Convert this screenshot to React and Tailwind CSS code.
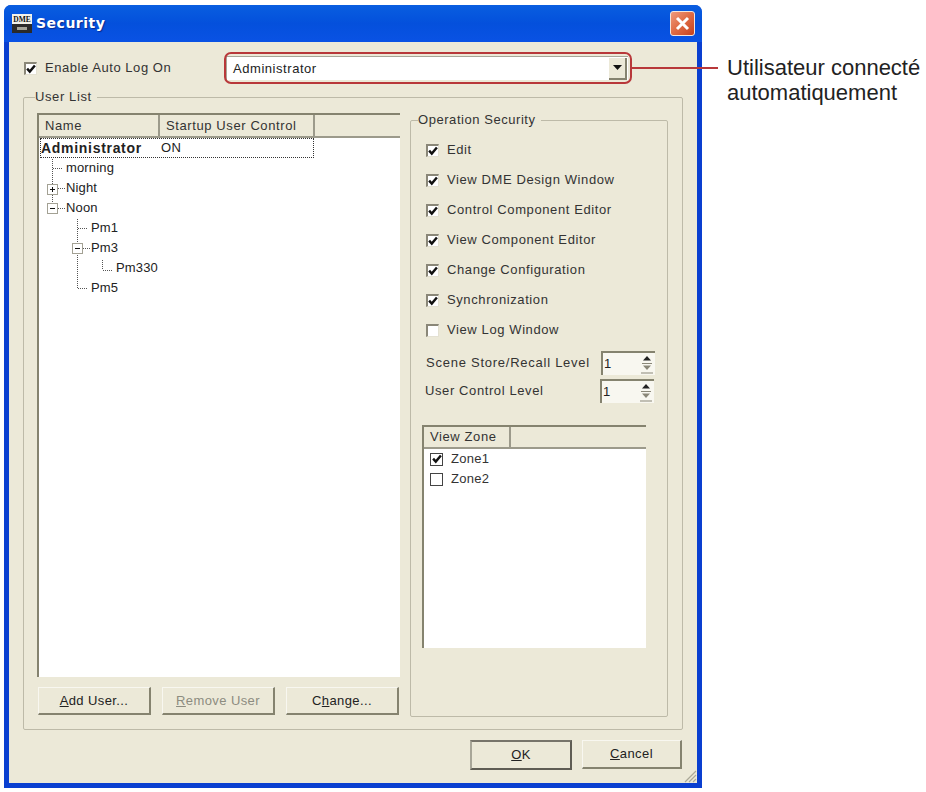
import React from "react";

const perms = [
    ["Edit", true],
    ["View DME Design Window", true],
    ["Control Component Editor", true],
    ["View Component Editor", true],
    ["Change Configuration", true],
    ["Synchronization", true],
    ["View Log Window", false],
];

const users = [
    ["morning", "pl-[27px]"],
    ["Night", "pl-[27px]"],
    ["Noon", "pl-[27px]"],
    ["Pm1", "pl-[52px]"],
    ["Pm3", "pl-[52px]"],
    ["Pm330", "pl-[77px]"],
    ["Pm5", "pl-[52px]"],
];

const Check = ({ on, boxed }) => (
    <span
        className={`flex h-[13px] w-[13px] shrink-0 items-center justify-center bg-white ${
            boxed
                ? "border border-[#444]"
                : "border-t-2 border-l-2 border-r border-b border-t-[#8a8778] border-l-[#8a8778] border-r-[#e4e1d2] border-b-[#e4e1d2]"
        }`}
    >
        {on && (
            <svg width="10" height="10" viewBox="0 0 9 9" className="shrink-0">
                <path d="M1 4.2 L3.4 6.8 L8 1.4" fill="none" stroke="#111" strokeWidth="2.2" />
            </svg>
        )}
    </span>
);

const Btn = ({ className = "", children, strong, off }) => (
    <button
        className={`flex items-center justify-center bg-[#ece9d8] text-[13px] tracking-[0.4px] ${
            strong
                ? "border-2 border-t-[#77746a] border-l-[#a8a698] border-r-[#5f5d54] border-b-[#5f5d54]"
                : "border-t border-l border-r-2 border-b-2 border-t-[#f8f7f0] border-l-[#f8f7f0] border-r-[#85836f] border-b-[#85836f]"
        } ${off ? "text-[#8d8c80]" : "text-[#222]"} ${className}`}
    >
        {children}
    </button>
);

const Group = ({ title, className = "", legend = "", children }) => (
    <fieldset className={`rounded-[2px] border border-[#bdbaa8] ${className}`}>
        <legend className={`pr-[5px] text-[13px] leading-[14px] text-[#333] ${legend}`}>{title}</legend>
        {children}
    </fieldset>
);

const HeaderCell = ({ className = "", children }) => (
    <div className={`flex items-center border-r-2 border-r-[#9c9a8b] pl-[6px] text-[13px] tracking-[0.6px] text-[#333] ${className}`}>
        {children}
    </div>
);

const Spinner = () => (
    <div className="flex h-[24px] w-[54px] border-t-2 border-l-2 border-t-[#85836f] border-l-[#85836f] bg-[#f8f7f0] pl-[1px] text-[13px] leading-[22px] text-[#222]">
        <span className="flex-1">1</span>
        <svg width="14" height="22" viewBox="0 0 14 22" className="mr-[1px]">
            <path d="M7 3 L11 7.5 L3 7.5 Z" fill="#222" />
            <path d="M2 10.5 H12" stroke="#8a8778" />
            <path d="M7 17 L11 12.5 L3 12.5 Z" fill="#8a8778" />
            <path d="M1 20 H13" stroke="#8a8778" />
        </svg>
    </div>
);

const TreeLines = () => (
    <svg className="absolute -left-[1px] top-0" width="130" height="170" viewBox="0 0 130 170">
        <g stroke="#555" strokeDasharray="1 1" fill="none">
            <path d="M14.5 21 V65" />
            <path d="M15 30.5 H24 M20 50.5 H27 M20 70.5 H27" />
            <path d="M39.5 81 V150" />
            <path d="M40 90.5 H50 M45 110.5 H52 M40 150.5 H50" />
            <path d="M64.5 122 V132 M65 132.5 H75" />
        </g>
        <g fill="#fff" stroke="#a3a194">
            <rect x="9.5" y="46.5" width="10" height="10" />
            <rect x="9.5" y="65.5" width="10" height="10" />
            <rect x="34.5" y="105.5" width="10" height="10" />
        </g>
        <path d="M12 51.5 H17 M14.5 49 V54 M12 70.5 H17 M37 110.5 H42" stroke="#111" />
    </svg>
);

const App = () => {
    return (
        <div className="flex h-[792px] w-[926px] bg-white pl-[4px] pt-[5px] font-['Liberation_Sans',sans-serif]">
            {/* Dialog window */}
            <div className="relative flex h-[783px] w-[698px] shrink-0 flex-col rounded-t-[7px] bg-[#0a3fd0] px-[5px] pb-[5px]">
                {/* Title bar */}
                <div className="-mx-[5px] flex h-[37px] items-center rounded-t-[7px] bg-gradient-to-b from-[#0a5ee0] via-[#0450dc] to-[#0a52e4] pl-[8px] pr-[7px]">
                    <svg width="20" height="19" viewBox="0 0 20 19" className="shrink-0">
                        <rect width="20" height="10" fill="#f2f2ea" />
                        <rect y="10" width="20" height="9" fill="#2a2a2a" />
                        <rect x="5" y="13" width="10" height="3" fill="#a5a59a" />
                        <text x="10" y="8" textAnchor="middle" fontSize="7.5" fontWeight="700" fontFamily="Liberation Serif, serif" fill="#111">DME</text>
                    </svg>
                    <span className="ml-[4px] flex-1 font-['DejaVu_Sans',sans-serif] text-[14px] font-bold tracking-[0.5px] text-white [text-shadow:1px_1px_1px_#0a2a90]">
                        Security
                    </span>
                    <div className="flex h-[25px] w-[25px] items-center justify-center rounded-[3px] border border-[#f4e6dc] bg-gradient-to-br from-[#ee9a7c] via-[#df6a42] to-[#c5401c]">
                        <svg width="15" height="15" viewBox="0 0 15 15">
                            <path d="M2 2 L13 13 M13 2 L2 13" stroke="#fff" strokeWidth="3" />
                        </svg>
                    </div>
                </div>

                {/* Client area */}
                <div className="flex flex-1 flex-col bg-[#ece9d8] pl-[14px] pr-[15px]">
                    <div className="flex h-[47px] items-center pl-[1px] pt-[5px]">
                        <div className="flex w-[202px] items-center gap-[8px] text-[13px] tracking-[0.55px] text-[#333]">
                            <Check on />
                            Enable Auto Log On
                        </div>
                        <div className="flex h-[24px] w-[402px] items-center border-t border-l border-t-[#a8a698] border-l-[#a8a698] bg-white pl-[6px] pr-[1px] text-[13px] tracking-[0.55px] text-[#222]">
                            <span className="flex-1">Administrator</span>
                            <span className="flex h-[22px] w-[18px] items-center justify-center border-r-2 border-b-2 border-r-[#85836f] border-b-[#85836f] bg-[#ece9d8]">
                                <svg width="9" height="5" viewBox="0 0 9 5">
                                    <path d="M0 0 H9 L4.5 5 Z" fill="#111" />
                                </svg>
                            </span>
                        </div>
                    </div>

                    <Group
                        title="User List"
                        legend="-ml-[2px] tracking-[0.6px]"
                        className="mt-[1px] flex h-[640px] gap-[10px] pl-[13px] pr-[14px]"
                    >
                        <div className="flex w-[363px] shrink-0 flex-col pt-[9px]">
                            {/* User tree */}
                            <div className="flex h-[564px] flex-col border-t-2 border-l-2 border-t-[#85836f] border-l-[#85836f] bg-white">
                                <div className="flex h-[23px] shrink-0 border-b-2 border-b-[#9c9a8b] bg-[#ece9d8]">
                                    <HeaderCell className="w-[121px]">Name</HeaderCell>
                                    <HeaderCell className="w-[155px]">Startup User Control</HeaderCell>
                                </div>
                                <div className="relative">
                                    <TreeLines />
                                    <div className="ml-[1px] flex h-[20px] w-[274px] items-center border border-dotted border-[#333] text-[#222]">
                                        <span className="w-[120px] text-[14px] font-bold tracking-[0.7px]">Administrator</span>
                                        <span className="text-[13px] tracking-[0.5px]">ON</span>
                                    </div>
                                    {users.map(([name, pad]) => (
                                        <div key={name} className={`relative flex h-[20px] items-center text-[13px] tracking-[0.15px] text-[#222] ${pad}`}>
                                            {name}
                                        </div>
                                    ))}
                                </div>
                            </div>
                            <div className="mt-[10px] flex justify-between pl-[1px] pr-[1px]">
                                <Btn className="h-[28px] w-[113px]">
                                    <span><u>A</u>dd User...</span>
                                </Btn>
                                <Btn off className="h-[28px] w-[113px]">
                                    <span><u>R</u>emove User</span>
                                </Btn>
                                <Btn className="h-[28px] w-[113px]">
                                    <span>C<u>h</u>ange...</span>
                                </Btn>
                            </div>
                        </div>

                        <Group
                            title="Operation Security"
                            legend="-ml-[8px] tracking-[0.55px]"
                            className="mt-[9px] h-[604px] w-[258px] shrink-0 pl-[15px] pr-[8px]"
                        >
                            <div className="flex flex-col pt-[8px]">
                                {perms.map(([label, on]) => (
                                    <div key={label} className="flex h-[30px] items-center gap-[8px] text-[13px] tracking-[0.6px] text-[#333]">
                                        <Check on={on} />
                                        {label}
                                    </div>
                                ))}
                            </div>
                            <div className="mt-[4px] flex h-[28px] items-center justify-between pr-[4px] text-[13px] tracking-[0.75px] text-[#333]">
                                <span>Scene Store/Recall Level</span>
                                <Spinner />
                            </div>
                            <div className="flex h-[27px] items-center justify-between pr-[5px] text-[13px] tracking-[0.6px] text-[#333]">
                                <span className="-ml-[1px]">User Control Level</span>
                                <Spinner />
                            </div>
                            <div className="-ml-[4px] mt-[21px] flex h-[223px] w-[224px] flex-col border-t-2 border-l-2 border-t-[#85836f] border-l-[#85836f] bg-white">
                                <div className="flex h-[22px] shrink-0 border-b-2 border-b-[#9c9a8b] bg-[#ece9d8]">
                                    <HeaderCell className="w-[87px]">View Zone</HeaderCell>
                                </div>
                                <div className="flex flex-col pl-[6px]">
                                    <div className="flex h-[20px] items-center gap-[8px] text-[13px] tracking-[0.3px] text-[#333]">
                                        <Check on boxed />
                                        Zone1
                                    </div>
                                    <div className="flex h-[20px] items-center gap-[8px] text-[13px] tracking-[0.3px] text-[#333]">
                                        <Check boxed />
                                        Zone2
                                    </div>
                                </div>
                            </div>
                        </Group>
                    </Group>

                    <div className="mt-[10px] flex justify-end gap-[10px]">
                        <Btn strong className="h-[30px] w-[102px]">
                            <span><u>O</u>K</span>
                        </Btn>
                        <Btn className="h-[29px] w-[100px]">
                            <span><u>C</u>ancel</span>
                        </Btn>
                    </div>
                </div>

                {/* Resize grip in the window corner */}
                <svg className="absolute bottom-[5px] right-[5px]" width="15" height="15" viewBox="0 0 15 15">
                    <path d="M14 3 L3 14 M14 7 L7 14 M14 11 L11 14" stroke="#aaa897" strokeWidth="1.2" />
                </svg>

                {/* Callout frame over the combo box */}
                <div className="pointer-events-none absolute left-[220px] top-[47px] h-[32px] w-[408px] rounded-[7px] border-2 border-[#b8383a]" />
            </div>

            {/* Callout label */}
            <div className="relative ml-[25px] pt-[50px] text-[22px] leading-[25px] text-[#222]">
                <div className="absolute -left-[95px] top-[62px] h-[2px] w-[86px] bg-[#b8383a]" />
                <p className="whitespace-nowrap">Utilisateur connecté</p>
                <p>automatiquement</p>
            </div>
        </div>
    );
};

export default App;
